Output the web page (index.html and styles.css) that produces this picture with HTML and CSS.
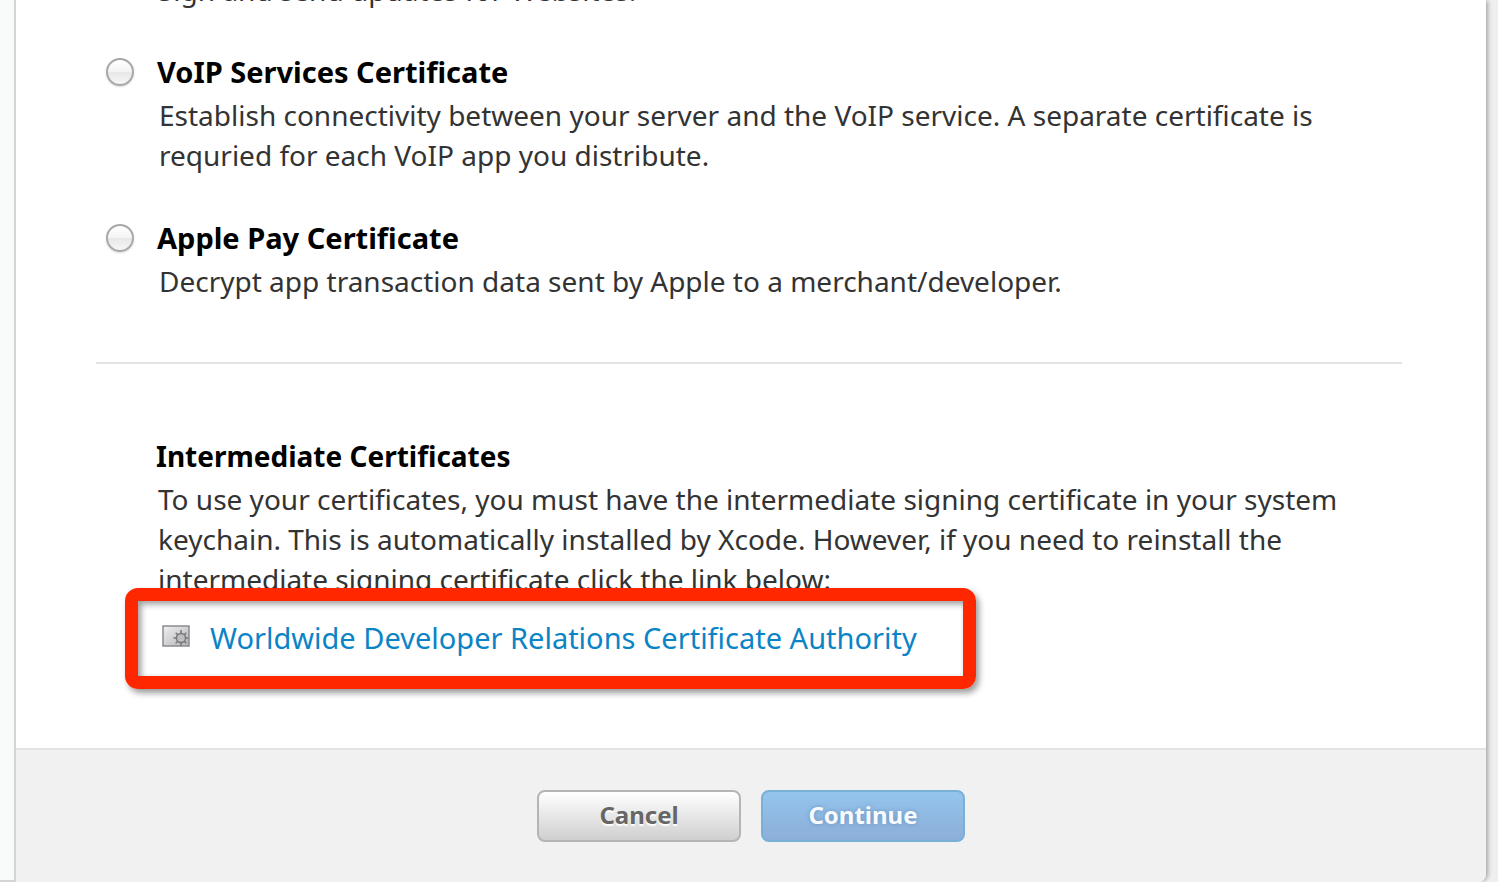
FILE: index.html
```html
<!DOCTYPE html>
<html lang="en">
<head>
<meta charset="utf-8">
<meta name="viewport" content="width=device-width, initial-scale=1">
<title>Add Certificate</title>
<link rel="stylesheet" href="styles.css">
</head>
<body>
<div class="page">
  <aside class="sidebar"></aside>
  <main class="panel">
    <form class="form">
      <div class="content">
        <p class="text text-clipped">Sign and send updates for Websites.</p>
        <div class="option">
          <input class="radio" type="radio" name="certificate" id="voip">
          <div class="copy">
            <label class="title" for="voip">VoIP Services Certificate</label>
            <p class="text">Establish connectivity between your server and the VoIP service. A separate certificate is<br>requried for each VoIP app you distribute.</p>
          </div>
        </div>
        <div class="option">
          <input class="radio" type="radio" name="certificate" id="pay">
          <div class="copy">
            <label class="title" for="pay">Apple Pay Certificate</label>
            <p class="text">Decrypt app transaction data sent by Apple to a merchant/developer.</p>
          </div>
        </div>
        <section class="intermediate">
          <h2 class="title">Intermediate Certificates</h2>
          <p class="text">To use your certificates, you must have the intermediate signing certificate in your system<br>keychain. This is automatically installed by Xcode. However, if you need to reinstall the<br>intermediate signing certificate click the link below:</p>
          <div class="download">
            <svg class="icon" viewBox="0 0 28 22" aria-hidden="true">
              <defs><linearGradient id="g" x1="0" y1="0" x2="1" y2="1"><stop offset="0" stop-color="#f0f0f3"/><stop offset="1" stop-color="#b4b4b8"/></linearGradient></defs>
              <rect x="1" y="1" width="26" height="20" fill="url(#g)" stroke="#8b8b8e" stroke-width="1.5"/>
              <g stroke="#77777a" stroke-width="1.500">
                <path d="M19 5v16M11.500 13h15M13.700 7.700l10.600 10.600M24.300 7.700L13.700 18.300"/>
                <circle cx="19" cy="13" r="4.600" fill="#bebebf"/>
              </g>
            </svg>
            <a class="link" href="#">Worldwide Developer Relations Certificate Authority</a>
            <span class="highlight"></span>
          </div>
        </section>
      </div>
      <footer class="actions">
        <button class="button cancel" type="button">Cancel</button>
        <button class="button continue" type="submit">Continue</button>
      </footer>
    </form>
  </main>
</div>
</body>
</html>
```
FILE: styles.css
```css
* { box-sizing: border-box; }
body {
  margin: 0;
  background: #efefef;
  color: #333;
  font-family: "Noto Sans", "Open Sans", sans-serif;
  overflow: hidden;
}
h2, p { margin: 0; }
.page { display: flex; align-items: flex-start; height: 100vh; }
.sidebar {
  width: 14px;
  align-self: stretch;
  background: #f9fbfa;
  border-bottom: 2px solid #d4d4d4;
}
.panel {
  flex: 1;
  margin-right: 12px;
  background: #fff;
  border-left: 2px solid #d4d4d4;
  border-bottom-right-radius: 8px;
  box-shadow: 3px 0 4px -1px rgba(0, 0, 0, .3);
}
.content { padding: 0 84px 32px 80px; }
.text { font-size: 28px; line-height: 40px; padding-left: 2px; white-space: nowrap; }
.text-clipped { margin: -30px 0 0 60px; }
.option { display: flex; gap: 23px; padding-left: 10px; margin-top: 40px; }
.option + .option { margin-top: 41px; }
.radio {
  appearance: none;
  flex: none;
  width: 28px;
  height: 28px;
  margin: 8px 0 0;
  border: 2px solid #a8a8a8;
  border-radius: 50%;
  background: linear-gradient(#fff, #f4f4f4 48%, #e8e8e8 52%, #f6f6f6);
  box-shadow: 0 1px 2px rgba(0, 0, 0, .15);
}
.title {
  display: block;
  margin-bottom: 1px;
  font-size: 29px;
  font-weight: 700;
  line-height: 44px;
  color: #000;
}
.intermediate {
  margin-top: 61px;
  padding: 70px 0 0 60px;
  border-top: 2px solid #e3e3e3;
}
.intermediate .title { font-size: 28px; }
.download {
  position: relative;
  display: flex;
  align-items: center;
  gap: 20px;
  height: 78px;
  margin-bottom: 39px;
  padding-left: 6px;
}
.icon { width: 28px; height: 22px; margin-bottom: 4px; }
.link { font-size: 29px; line-height: 40px; color: #0a84c6; text-decoration: none; white-space: nowrap; }
.highlight {
  position: absolute;
  top: -11px;
  left: -31px;
  width: 851px;
  height: 101px;
  border: 13px solid #ff2700;
  border-radius: 13px;
  box-shadow: 3px 4px 6px rgba(0, 0, 0, .4), inset 3px 3px 6px rgba(0, 0, 0, .4);
  pointer-events: none;
}
.actions {
  display: flex;
  justify-content: center;
  gap: 20px;
  padding: 40px 0;
  background: #f1f1f1;
  border-top: 2px solid #e3e3e3;
  border-bottom-right-radius: 8px;
}
.button {
  width: 204px;
  height: 52px;
  padding: 0 0 2px;
  border-radius: 8px;
  font: 700 24px/32px "Noto Sans", "Open Sans", sans-serif;
}
.cancel {
  color: #666;
  border: 2px solid #b5b5b5;
  background: linear-gradient(#fff, #cfcfcf);
  text-shadow: 0 2px 1px #fff;
}
.continue {
  color: #f8fbfe;
  border: 2px solid #7ab0d8;
  background: linear-gradient(#94c4ec, #8cafd9);
  text-shadow: 0 0 4px rgba(60, 110, 160, .5);
}
```
